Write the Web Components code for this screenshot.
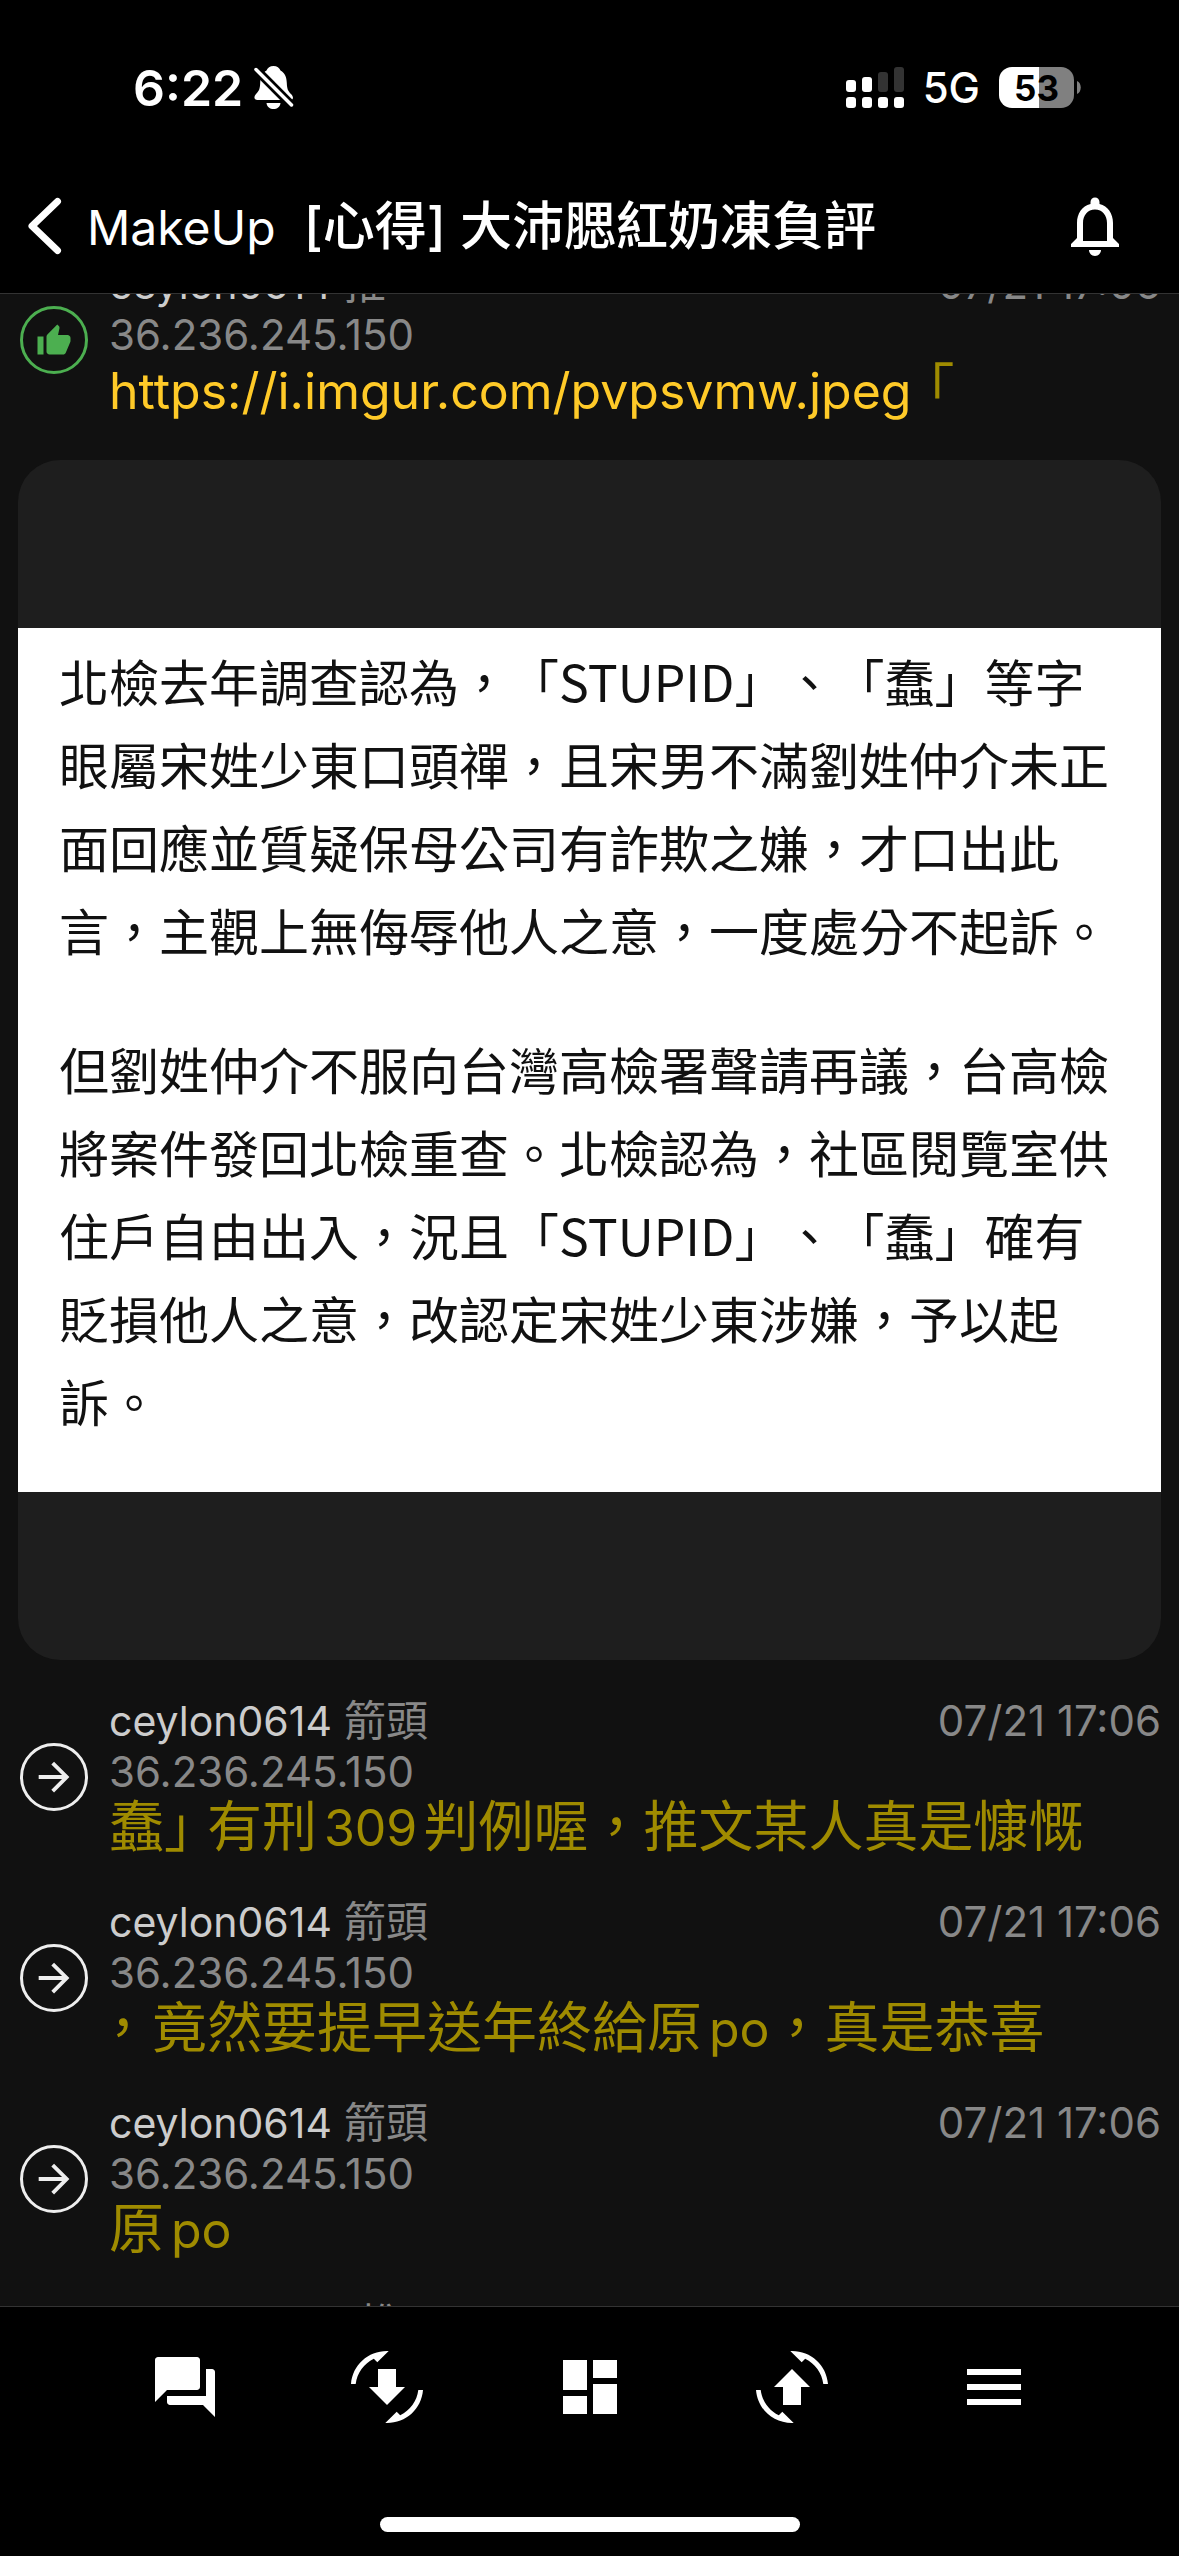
<!DOCTYPE html>
<html lang="zh-Hant">
<head>
<meta charset="utf-8">
<meta name="viewport" content="width=device-width, initial-scale=1">
<title>MakeUp [心得] 大沛腮紅奶凍負評</title>
<style>
  html, body { height: 100%; }
  body {
    margin: 0;
    background: #000;
    font-family: Inter, "Noto Sans CJK TC", sans-serif;
    color: #fff;
  }
</style>
</head>
<body>
<post-screen>
  <phone-status slot="status"></phone-status>
  <post-nav slot="nav" board="MakeUp">[心得] 大沛腮紅奶凍負評</post-nav>

  <push-comment user="ceylon0614" kind="推" ip="36.236.245.150" time="07/21 17:06"><a href="https://i.imgur.com/pvpsvmw.jpeg">https://i.imgur.com/pvpsvmw.jpeg</a> <span class="half">「</span></push-comment>
  <image-preview>
    <p>北檢去年調查認為，「STUPID」、「蠢」等字眼屬宋姓少東口頭禪，且宋男不滿劉姓仲介未正面回應並質疑保母公司有詐欺之嫌，才口出此言，主觀上無侮辱他人之意，一度處分不起訴。</p>
    <p>但劉姓仲介不服向台灣高檢署聲請再議，台高檢將案件發回北檢重查。北檢認為，社區閱覽室供住戶自由出入，況且「STUPID」、「蠢」確有貶損他人之意，改認定宋姓少東涉嫌，予以起訴。</p>
  </image-preview>
  <push-comment user="ceylon0614" kind="箭頭" ip="36.236.245.150" time="07/21 17:06">蠢<span class="half">」</span> 有刑<span class="latin">309</span>判例喔，推文某人真是慷慨</push-comment>
  <push-comment user="ceylon0614" kind="箭頭" ip="36.236.245.150" time="07/21 17:06"><span class="half">，</span> 竟然要提早送年終給原<span class="latin">po</span>，真是恭喜</push-comment>
  <push-comment user="ceylon0614" kind="箭頭" ip="36.236.245.150" time="07/21 17:06">原<span class="latin">po</span></push-comment>
  <push-comment user="ceylon06141" kind="推" ip="36.236.245.150" time="07/21 17:06"></push-comment>

  <tool-bar slot="tools"></tool-bar>
</post-screen>

<script>
  const define = (name, html, setup) => customElements.define(name, class extends HTMLElement {
    connectedCallback() {
      if (this.shadowRoot) return;
      this.attachShadow({ mode: "open" }).innerHTML = html;
      if (setup) setup(this, this.shadowRoot);
    }
  });

  define("post-screen", `
    <style>
      :host { display: flex; flex-direction: column; height: 100vh; background: #000; }
      header { border-bottom: 1px solid #333; }
      main { flex: 1; min-height: 0; overflow: hidden; background: #111; }
      .list { margin-top: -53px; }
      footer { border-top: 1px solid #333; }
    </style>
    <header><slot name="status"></slot><slot name="nav"></slot></header>
    <main><div class="list"><slot></slot></div></main>
    <footer><slot name="tools"></slot></footer>
  `);

  define("phone-status", `
    <style>
      :host { display: flex; align-items: center; justify-content: space-between;
              height: 141px; padding: 17px 98px 0 133px; }
      div { display: flex; align-items: center; }
      svg { display: block; }
      .left { gap: 11px; }
      .time { font-size: 50px; font-weight: 600; line-height: 60px; }
      .right { gap: 19px; }
      .net { font-size: 42px; font-weight: 500; line-height: 50px; }
      .power { gap: 3px; }
      .level { justify-content: center; width: 75px; height: 41px; border-radius: 13px;
               background: linear-gradient(90deg, #fff 53%, #808080 53%);
               color: #000; font-size: 35px; font-weight: 700; }
    </style>
    <div class="left">
      <span class="time">6:22</span>
      <svg width="40" height="43" viewBox="0 0 40 43" fill="#fff" aria-label="靜音">
        <path d="M19.500 0C23 0 25.500 2 26.500 4.500C31 7 32.500 11 32.800 17C33 23 34 25 37 28C40 31 39.500 34 36 34H3.500C0 34-.5 31 2 28C5 25 6 23 6.200 17C6.500 11 8 7 12.500 4.500C13.500 2 16 0 19.500 0Z"/>
        <path d="M12.500 37H26.500C26 41 23 43 19.500 43S13 41 12.500 37Z"/>
        <path d="M2 3.500L37.500 39" stroke="#000" stroke-width="9"/>
        <path d="M2 3.500L37.500 39" stroke="#fff" stroke-width="3.500" stroke-linecap="round"/>
      </svg>
    </div>
    <div class="right">
      <svg width="58" height="41" viewBox="0 0 58 41" fill="#fff" aria-label="訊號">
        <rect y="13" width="10" height="12" rx="3"/><rect x="16" y="10" width="10" height="15" rx="3"/>
        <rect x="32" y="5" width="10" height="20" rx="3" fill="#333"/><rect x="48" width="10" height="25" rx="3" fill="#333"/>
        <rect y="30" width="10" height="11" rx="3"/><rect x="16" y="30" width="10" height="11" rx="3"/>
        <rect x="32" y="30" width="10" height="11" rx="3"/><rect x="48" y="30" width="10" height="11" rx="3"/>
      </svg>
      <span class="net">5G</span>
      <div class="power">
        <div class="level">53</div>
        <svg width="4" height="13" viewBox="0 0 4 13"><path d="M0 0C5 2 5 11 0 13Z" fill="#808080"/></svg>
      </div>
    </div>
  `);

  define("post-nav", `
    <style>
      :host { display: flex; align-items: center; height: 135px; padding: 0 48px 0 24px; }
      button { display: block; padding: 0; border: 0; background: none; color: inherit; }
      svg { display: block; }
      .text { display: flex; flex: 1; align-items: baseline; gap: 28px; margin-left: 21px; padding-top: 4px; white-space: nowrap; }
      .board { font-size: 48px; line-height: 60px; }
      h1 { margin: 0; font-size: 52px; line-height: 60px; font-weight: 500; }
    </style>
    <button aria-label="返回"><svg width="42" height="60" viewBox="0 0 42 60">
      <path d="M33.500 5.500L8 30L33.500 54.500" fill="none" stroke="#fff" stroke-width="7" stroke-linecap="round" stroke-linejoin="round"/></svg></button>
    <div class="text"><span class="board"></span><h1><slot></slot></h1></div>
    <button aria-label="通知"><svg width="72" height="72" viewBox="0 0 24 24" fill="#fff">
      <path d="M12 22c1.100 0 2-.9 2-2h-4c0 1.100.89 2 2 2zm6-6v-5c0-3.070-1.640-5.640-4.500-6.320V4c0-.83-.67-1.500-1.500-1.500s-1.500.67-1.500 1.500v.68C7.630 5.360 6 7.920 6 11v5l-2 2v1h16v-1l-2-2zm-2 1H8v-6c0-2.480 1.510-4.500 4-4.500s4 2.020 4 4.500v6z"/></svg></button>
  `, (el, root) => { root.querySelector(".board").textContent = el.getAttribute("board"); });

  const badges = {
    "推": `<svg width="68" height="68" viewBox="0 0 68 68" fill="#4caf50"><circle cx="34" cy="34" r="32.500" fill="none" stroke="#4caf50" stroke-width="3"/>
      <path transform="translate(16 17) scale(1.500)" d="M1 21h4V9H1v12zm22-11c0-1.100-.9-2-2-2h-6.310l.95-4.570.03-.32c0-.41-.17-.79-.44-1.060L14.170 1 7.590 7.590C7.220 7.950 7 8.450 7 9v10c0 1.100.9 2 2 2h9c.83 0 1.540-.5 1.840-1.220l3.020-7.050c.09-.23.14-.47.14-.73v-2z"/></svg>`,
    "箭頭": `<svg width="68" height="68" viewBox="0 0 68 68" fill="#eee"><circle cx="34" cy="34" r="32.500" fill="none" stroke="#eee" stroke-width="3"/>
      <path transform="translate(11 11) scale(1.920)" d="M12 4l-1.410 1.410L16.170 11H4v2h12.170l-5.580 5.590L12 20l8-8z"/></svg>`
  };

  define("push-comment", `
    <style>
      :host { display: flex; align-items: center; gap: 21px; padding: 17px 18px 20px 20px; color: #888; }
      .badge { flex: none; }
      svg { display: block; }
      .body { flex: 1; min-width: 0; }
      .meta { display: flex; align-items: baseline; gap: 12px; height: 51px; font-size: 42px; line-height: 51px; }
      .user { color: #ccc; font-size: 41px; }
      time { margin-left: auto; }
      .ip { font-size: 42px; line-height: 51px; }
      .text { height: 62px; font-size: 55px; line-height: 58px; color: #9f8b00; text-autospace: normal; }
      ::slotted(a) { color: #ffca28; text-decoration: none; font-size: 50px; }
      ::slotted(.latin) { font-size: 50px; }
      ::slotted(.half) { font-feature-settings: "halt"; }
    </style>
    <div class="badge"></div>
    <div class="body">
      <div class="meta"><span class="user"></span><span class="kind"></span><time></time></div>
      <div class="ip"></div>
      <div class="text"><slot></slot></div>
    </div>
  `, (el, root) => {
    for (const key of ["user", "kind", "ip"]) root.querySelector("." + key).textContent = el.getAttribute(key);
    root.querySelector("time").textContent = el.getAttribute("time");
    root.querySelector(".badge").innerHTML = badges[el.getAttribute("kind")];
  });

  define("image-preview", `
    <style>
      :host { display: block; margin: 18px; padding: 168px 0; border-radius: 42px; background: #1e1e1e; }
      .page { padding: 11px 38px 50px 41px; background: #fff; color: #111; }
      ::slotted(p) { margin: 0 0 56px; font-family: "Noto Sans CJK TC", sans-serif;
        font-size: 50px; line-height: 83px; font-weight: 400; text-spacing-trim: space-all; }
      ::slotted(p:last-of-type) { margin-bottom: 0; }
    </style>
    <div class="page"><slot></slot></div>
  `);

  define("tool-bar", `
    <style>
      :host { display: flex; flex-direction: column; align-items: center; height: 249px; }
      nav { display: flex; box-sizing: border-box; width: 100%; padding: 44px 84px 0; }
      button { flex: 1; display: flex; justify-content: center; padding: 0; border: 0; background: none; }
      .home { width: 420px; height: 15px; margin: auto 0 24px; border-radius: 8px; background: #fff; }
    </style>
    <nav>
      <button aria-label="討論"><svg width="72" height="72" viewBox="0 0 24 24" fill="#fff"><path d="M21 6h-2v9H6v2c0 .55.45 1 1 1h11l4 4V7c0-.55-.45-1-1-1zm-4 6V3c0-.55-.45-1-1-1H3c-.55 0-1 .45-1 1v14l4-4h10c.55 0 1-.45 1-1z"/></svg></button>
      <button aria-label="往下更新"><svg width="72" height="72" viewBox="0 0 72 72" fill="#fff">
        <g id="turn"><path d="M0 33C1.500 14 17 0 36 0H37.700L26.300 11.300L22.800 7.800C13 12.500 6 22 4.700 33Z"/><path d="M72 39C70.500 58 55 72 36 72H34.300L45.700 60.700L49.200 64.200C59 59.500 66 50 67.300 39Z"/></g>
        <path d="M27 18H45V36H54L36 54L18 36H27Z"/></svg></button>
      <button aria-label="看板"><svg width="72" height="72" viewBox="0 0 24 24" fill="#fff"><path d="M3 13h8V3H3v10zm0 8h8v-6H3v6zm10 0h8V11h-8v10zm0-18v6h8V3h-8z"/></svg></button>
      <button aria-label="往上更新"><svg width="72" height="72" viewBox="0 0 72 72" fill="#fff">
        <use href="#turn" transform="translate(72 0) scale(-1 1)"/>
        <path d="M27 54H45V36H54L36 18L18 36H27Z"/></svg></button>
      <button aria-label="選單"><svg width="72" height="72" viewBox="0 0 24 24" fill="#fff"><path d="M3 18h18v-2H3v2zm0-5h18v-2H3v2zm0-7v2h18V6H3z"/></svg></button>
    </nav>
    <div class="home"></div>
  `);
</script>
</body>
</html>
